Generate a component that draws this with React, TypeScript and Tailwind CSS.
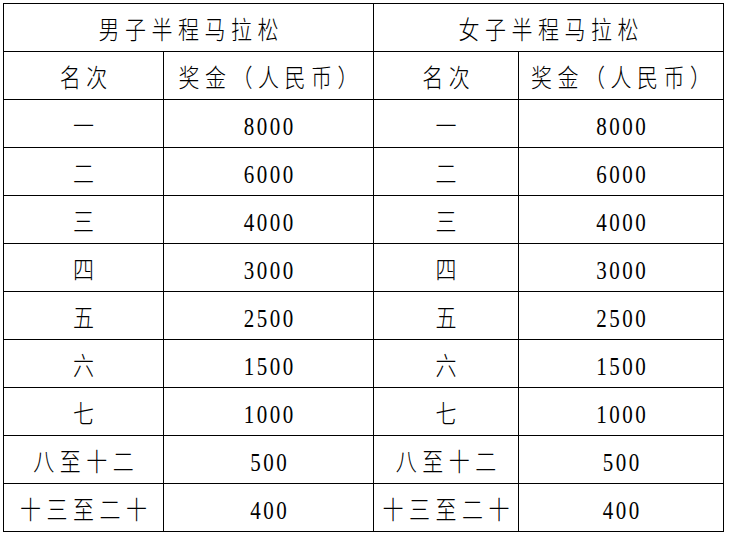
import React from "react";

const rows: [string, string][] = [
  ["一", "8000"],
  ["二", "6000"],
  ["三", "4000"],
  ["四", "3000"],
  ["五", "2500"],
  ["六", "1500"],
  ["七", "1000"],
  ["八至十二", "500"],
  ["十三至二十", "400"],
];

function Cell({ children, span, num }: { children: React.ReactNode; span?: boolean; num?: boolean }) {
  return (
    <div
      className={
        "bg-white flex items-center justify-center pt-[7px] text-black " + (span ? "col-span-2" : "")
      }
    >
      <span
        className={
          "inline-block scale-y-[1.18] leading-none " +
          (num ? "text-[21px] tracking-[2.5px] pl-[2.5px]" : "text-[21px] tracking-[5.5px] pl-[5.5px] font-light")
        }
      >
        {children}
      </span>
    </div>
  );
}

export default function App() {
  return (
    <div className="w-[730px] h-[535px] bg-white pt-[3px] pl-[3px]" style={{ fontFamily: '"Liberation Serif", "Noto Sans CJK SC", serif' }}>
      <div className="grid grid-cols-[159px_209px_144px_204px] auto-rows-[47px] gap-px bg-black p-px w-[721px]">
        <Cell span>男子半程马拉松</Cell>
        <Cell span>女子半程马拉松</Cell>
        <Cell>名次</Cell>
        <Cell>奖金（人民币）</Cell>
        <Cell>名次</Cell>
        <Cell>奖金（人民币）</Cell>
        {rows.map(([a, b]) => (
          <React.Fragment key={a}>
            <Cell>{a}</Cell>
            <Cell num>{b}</Cell>
            <Cell>{a}</Cell>
            <Cell num>{b}</Cell>
          </React.Fragment>
        ))}
      </div>
    </div>
  );
}
